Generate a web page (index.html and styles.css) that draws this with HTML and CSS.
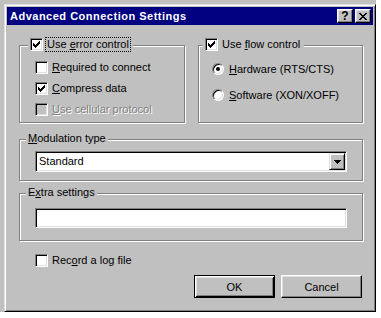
FILE: index.html
```html
<!DOCTYPE html>
<html lang="en">
<head>
    <meta charset="UTF-8">
    <meta name="viewport" content="width=device-width, initial-scale=1.0">
    <title>Advanced Connection Settings</title>
    <link rel="stylesheet" href="styles.css">
</head>
<body>
    <div class="screen">
        <div class="dialog">
            <div class="caption">
                <span class="caption-title">Advanced Connection Settings</span>
                <div class="caption-buttons">
                    <span class="cap-btn help">?</span>
                    <span class="cap-btn">
                        <svg width="8" height="7" viewBox="0 0 8 7" shape-rendering="crispEdges">
                            <path d="M0 0h2v1h-2zM6 0h2v1h-2zM1 1h2v1h-2zM5 1h2v1h-2zM2 2h4v1h-4zM3 3h2v1h-2zM2 4h4v1h-4zM1 5h2v1h-2zM5 5h2v1h-2zM0 6h2v1h-2zM6 6h2v1h-2z" fill="#000"/>
                        </svg>
                    </span>
                </div>
            </div>

            <div class="dialog-body">
                <div class="top-row">
                    <div class="group">
                        <div class="group-title check-title">
                            <span class="checkbox">
                                <svg class="tick" width="7" height="7" viewBox="0 0 7 7" shape-rendering="crispEdges"><path d="M6 0h1v1h-1zM5 1h2v1h-2zM0 2h1v1h-1zM4 2h3v1h-3zM0 3h2v1h-2zM3 3h3v1h-3zM0 4h5v1h-5zM1 5h3v1h-3zM2 6h1v1h-1z"/></svg>
                            </span>
                            <span class="title-label focused">Use <u>e</u>rror control</span>
                        </div>
                        <div class="options">
                            <div class="option">
                                <span class="checkbox"></span>
                                <span class="option-text"><u>R</u>equired to connect</span>
                            </div>
                            <div class="option">
                                <span class="checkbox">
                                    <svg class="tick" width="7" height="7" viewBox="0 0 7 7" shape-rendering="crispEdges"><path d="M6 0h1v1h-1zM5 1h2v1h-2zM0 2h1v1h-1zM4 2h3v1h-3zM0 3h2v1h-2zM3 3h3v1h-3zM0 4h5v1h-5zM1 5h3v1h-3zM2 6h1v1h-1z"/></svg>
                                </span>
                                <span class="option-text"><u>C</u>ompress data</span>
                            </div>
                            <div class="option disabled">
                                <span class="checkbox"></span>
                                <span class="option-text"><u>U</u>se cellular protocol</span>
                            </div>
                        </div>
                    </div>

                    <div class="group">
                        <div class="group-title check-title flow-title">
                            <span class="checkbox">
                                <svg class="tick" width="7" height="7" viewBox="0 0 7 7" shape-rendering="crispEdges"><path d="M6 0h1v1h-1zM5 1h2v1h-2zM0 2h1v1h-1zM4 2h3v1h-3zM0 3h2v1h-2zM3 3h3v1h-3zM0 4h5v1h-5zM1 5h3v1h-3zM2 6h1v1h-1z"/></svg>
                            </span>
                            <span class="title-label">Use <u>f</u>low control</span>
                        </div>
                        <div class="radios">
                            <div class="option">
                                <span class="radio selected"></span>
                                <span class="radio-text"><u>H</u>ardware (RTS/CTS)</span>
                            </div>
                            <div class="option">
                                <span class="radio"></span>
                                <span class="radio-text"><u>S</u>oftware (XON/XOFF)</span>
                            </div>
                        </div>
                    </div>
                </div>

                <div class="group modulation">
                    <div class="group-title text-title"><u>M</u>odulation type</div>
                    <div class="field-wrap combo-wrap">
                        <div class="combo">
                            <span class="combo-value">Standard</span>
                            <span class="combo-btn">
                                <svg width="7" height="4" viewBox="0 0 7 4" shape-rendering="crispEdges"><path d="M0 0h7v1h-1v1h-1v1h-1v1h-1v-1h-1v-1h-1v-1h-1z" fill="#000"/></svg>
                            </span>
                        </div>
                    </div>
                </div>

                <div class="group extra">
                    <div class="group-title text-title">E<u>x</u>tra settings</div>
                    <div class="field-wrap input-wrap">
                        <div class="text-input"></div>
                    </div>
                </div>

                <div class="option log-row">
                    <span class="checkbox"></span>
                    <span class="option-text">Rec<u>o</u>rd a log file</span>
                </div>

                <div class="actions">
                    <button class="btn btn-default">OK</button>
                    <button class="btn">Cancel</button>
                </div>
            </div>
        </div>
    </div>
</body>
</html>
```

FILE: styles.css
```css
body {
    margin: 0;
    background-color: #ffffff;
    font-family: "Liberation Sans", Arial, sans-serif;
    font-size: 11px;
    color: #000000;
}

.screen {
    width: 376px;
    height: 312px;
    box-sizing: border-box;
    padding: 4px 0 0 4px;
    background-color: #c0c0c0;
}

.dialog {
    width: 372px;
    height: 308px;
    box-sizing: border-box;
    padding: 2px;
    background-color: #c0c0c0;
    border: 1px solid;
    border-color: #dfdfdf #000000 #000000 #dfdfdf;
    box-shadow: inset 1px 1px #ffffff, inset -1px -1px #808080;
}

/* title bar */

.caption {
    height: 18px;
    display: flex;
    align-items: center;
    justify-content: space-between;
    background-color: #000080;
}

.caption-title {
    padding-left: 3px;
    color: #ffffff;
    font-weight: bold;
    letter-spacing: 0.5px;
    line-height: 18px;
}

.caption-buttons {
    display: flex;
    gap: 2px;
    margin-right: 2px;
}

.cap-btn {
    width: 16px;
    height: 14px;
    box-sizing: border-box;
    display: flex;
    align-items: center;
    justify-content: center;
    background-color: #c0c0c0;
    border: 1px solid;
    border-color: #ffffff #000000 #000000 #ffffff;
    box-shadow: inset -1px -1px #808080, inset 1px 1px #dfdfdf;
}

.help {
    font-weight: bold;
    font-size: 12px;
    line-height: 12px;
}

/* body */

.dialog-body {
    padding: 20px 10px 0 12px;
}

.top-row {
    display: grid;
    grid-template-columns: 166px 165px;
    column-gap: 13px;
}

.group {
    border: 1px solid #808080;
    box-shadow: inset 1px 1px #ffffff, 1px 1px #ffffff;
}

.group-title {
    display: flex;
    align-items: center;
    width: fit-content;
    padding: 0 2px;
    background-color: #c0c0c0;
}

.check-title {
    height: 15px;
    margin: -9px 0 0 8px;
}

.flow-title {
    margin-left: 4px;
}

.text-title {
    height: 13px;
    line-height: 13px;
    margin: -8px 0 0 6px;
}

.title-label {
    margin-left: 2px;
    padding: 0 1px;
    line-height: 13px;
    border: 1px dotted transparent;
}

.focused {
    border-color: #000000;
}

.options {
    display: flex;
    flex-direction: column;
    gap: 8px;
    padding: 9px 0 6px 15px;
}

.radios {
    display: flex;
    flex-direction: column;
    gap: 14px;
    padding: 11px 0 0 13px;
}

.option {
    display: flex;
    align-items: center;
    height: 13px;
    line-height: 13px;
}

.radios .option {
    height: 12px;
}

.option-text {
    margin-left: 4px;
}

.radio-text {
    margin-left: 5px;
}

.disabled .option-text {
    color: #808080;
    text-shadow: 1px 1px #ffffff;
}

.checkbox {
    width: 13px;
    height: 13px;
    box-sizing: border-box;
    display: flex;
    align-items: center;
    justify-content: center;
    flex-shrink: 0;
    background-color: #ffffff;
    border: 1px solid;
    border-color: #808080 #ffffff #ffffff #808080;
    box-shadow: inset 1px 1px #000000, inset -1px -1px #dfdfdf;
}

.disabled .checkbox {
    background-color: #c0c0c0;
}

.tick {
    fill: #000000;
}

.radio {
    position: relative;
    width: 12px;
    height: 12px;
    box-sizing: border-box;
    flex-shrink: 0;
    border-radius: 50%;
    background-color: #ffffff;
    border: 1px solid;
    border-color: #808080 #ffffff #ffffff #808080;
    box-shadow: inset 1px 1px #000000, inset -1px -1px #dfdfdf;
}

.radio.selected::after {
    content: "";
    position: absolute;
    left: 3px;
    top: 3px;
    width: 4px;
    height: 4px;
    border-radius: 50%;
    background-color: #000000;
}

.modulation {
    margin-top: 16px;
}

.extra {
    margin-top: 12px;
}

.combo-wrap {
    padding: 6px 15px 8px 15px;
}

.input-wrap {
    padding: 9px 15px 12px 15px;
}

.combo,
.text-input {
    box-sizing: border-box;
    padding: 1px;
    background-color: #ffffff;
    border: 1px solid;
    border-color: #808080 #ffffff #ffffff #808080;
    box-shadow: inset 1px 1px #000000, inset -1px -1px #dfdfdf;
}

.combo {
    display: flex;
    height: 21px;
}

.combo-value {
    flex: 1;
    padding-left: 2px;
    line-height: 17px;
}

.combo-btn {
    width: 16px;
    height: 17px;
    box-sizing: border-box;
    display: flex;
    align-items: center;
    justify-content: center;
    background-color: #c0c0c0;
    border: 1px solid;
    border-color: #dfdfdf #000000 #000000 #dfdfdf;
    box-shadow: inset 1px 1px #ffffff, inset -1px -1px #808080;
}

.text-input {
    height: 20px;
}

.log-row {
    margin: 13px 0 0 16px;
}

.actions {
    display: flex;
    justify-content: flex-end;
    gap: 6px;
    margin: 8px 1px 0 0;
}

.btn {
    width: 81px;
    height: 23px;
    box-sizing: border-box;
    padding: 0;
    font-family: "Liberation Sans", Arial, sans-serif;
    font-size: 11px;
    color: #000000;
    background-color: #c0c0c0;
    border: 1px solid;
    border-color: #ffffff #000000 #000000 #ffffff;
    box-shadow: inset -1px -1px #808080, inset 1px 1px #dfdfdf;
}

.btn-default {
    border-color: #000000;
    box-shadow: inset 1px 1px #ffffff, inset -1px -1px #000000, inset 2px 2px #dfdfdf, inset -2px -2px #808080;
}
```
